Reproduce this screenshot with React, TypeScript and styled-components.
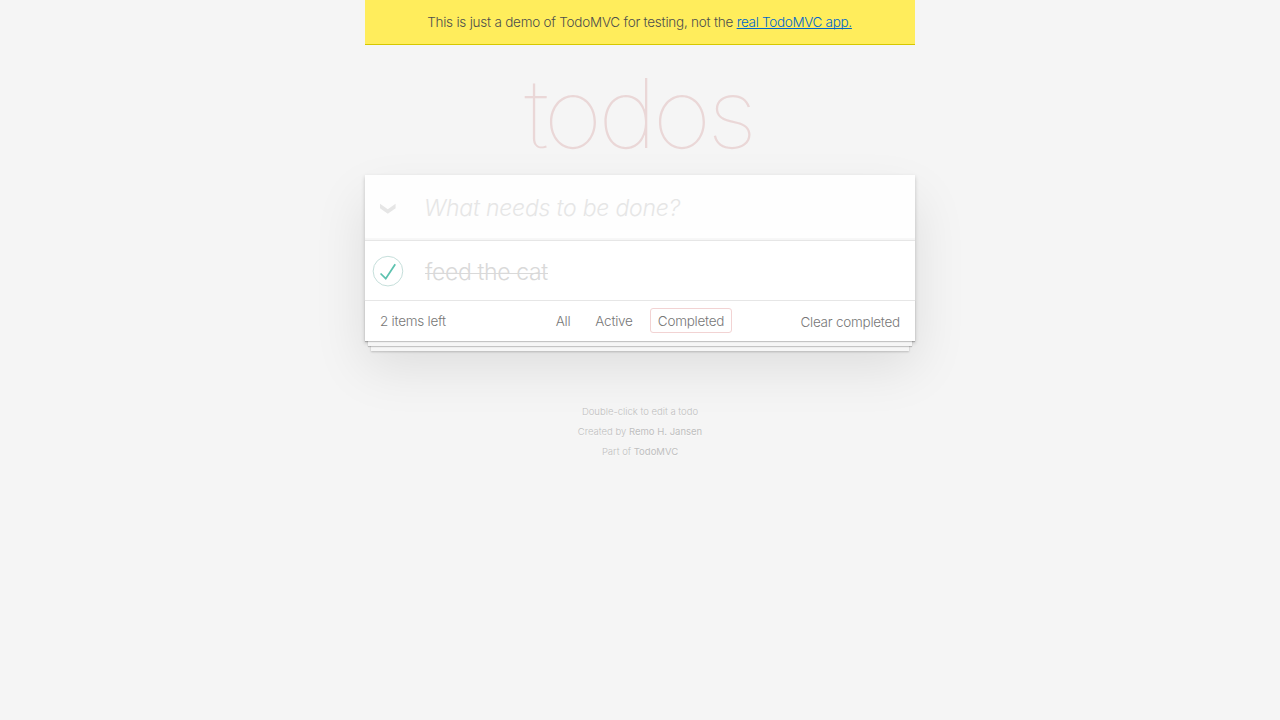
import React from "react";
import styled, { createGlobalStyle, css } from "styled-components";

const Global = createGlobalStyle`
  body {
    margin: 0;
    background: #f5f5f5;
    color: #4d4d4d;
    font: 300 13.5px/20px Inter, "Liberation Sans", sans-serif;
    -webkit-font-smoothing: antialiased;
  }
`;

const Page = styled.div`
  width: 550px;
  margin: 0 auto;
`;

const Banner = styled.div`
  box-sizing: border-box;
  height: 45px;
  padding-right: 1px;
  display: flex;
  align-items: center;
  justify-content: center;
  background: #ffed5c;
  border-bottom: 1px solid #d6c800;
  white-space: pre;
  letter-spacing: -0.23px;
`;

const BannerLink = styled.a`
  color: #0066cc;
  letter-spacing: -0.31px;
  text-decoration: underline;
  text-decoration-thickness: 1px;
  text-underline-offset: 1px;
  text-decoration-skip-ink: none;
`;

const Title = styled.h1`
  margin: 0;
  padding-right: 3px;
  height: 130px;
  line-height: 137px;
  font-size: 96px;
  font-weight: 100;
  letter-spacing: -4.3px;
  text-align: center;
  color: rgba(175, 47, 47, 0.15);
  transform: scaleX(1.06);
`;

const Card = styled.section`
  background: #fff;
  box-shadow: 0 2px 4px rgba(0, 0, 0, 0.2), 0 25px 50px rgba(0, 0, 0, 0.1);
`;

const Row = styled.div`
  display: flex;
  align-items: center;
  font-size: 23px;
`;

const EntryRow = styled(Row)`
  height: 65px;
  background: rgba(0, 0, 0, 0.003);
  box-shadow: inset 0 -2px 1px rgba(0, 0, 0, 0.03);
`;

const TodoRow = styled(Row)`
  height: 59px;
  border-top: 1px solid #e6e6e6;
`;

const IconCell = styled.div`
  width: 60px;
  display: flex;
`;

const Placeholder = styled.span`
  padding-top: 1px;
  margin-left: -1px;
  font-style: italic;
  color: #e6e6e6;
  letter-spacing: -0.21px;
`;

const TodoLabel = styled.span`
  position: relative;
  padding-top: 2px;
  color: #d9d9d9;
  letter-spacing: -0.37px;

  &::after {
    content: "";
    position: absolute;
    left: 0;
    right: 0;
    top: 13px;
    height: 1px;
    background: currentColor;
  }
`;

const Footer = styled.footer`
  box-sizing: border-box;
  height: 41px;
  padding: 0 15px;
  border-top: 1px solid #e6e6e6;
  display: grid;
  grid-template-columns: 168px 1fr 110px;
  align-items: center;
  color: #777;
  letter-spacing: -0.25px;
  white-space: nowrap;
  box-shadow: 0 1px 1px rgba(0, 0, 0, 0.2), 0 8px 0 -3px #f6f6f6,
    0 9px 1px -3px rgba(0, 0, 0, 0.2), 0 16px 0 -6px #f6f6f6,
    0 17px 2px -6px rgba(0, 0, 0, 0.2);
`;

const Filters = styled.nav`
  display: flex;
  gap: 10px;
  padding-bottom: 2px;
`;

const Filter = styled.a<{ $width: number; $selected?: boolean }>`
  box-sizing: border-box;
  width: ${(p) => p.$width}px;
  height: 25px;
  line-height: 24px;
  text-align: center;
  border: 1px solid transparent;
  border-radius: 3px;
  ${(p) =>
    p.$selected &&
    css`
      border-color: #f2d3d3;
    `}
`;

const Clear = styled.button`
  padding: 2px 0 0;
  border: 0;
  background: none;
  font: inherit;
  color: inherit;
  letter-spacing: inherit;
  text-align: right;
`;

const Info = styled.footer`
  margin-top: 61px;
  color: #bfbfbf;
  font-size: 9.5px;
  line-height: 20px;
  text-align: center;
  text-shadow: 0 1px 0 rgba(255, 255, 255, 0.5);
`;

const InfoLine = styled.p`
  margin: 0;
`;

const Credit = styled.a`
  font-weight: 400;
`;

const Chevron = () => (
  <svg width="46" height="20" viewBox="0 0 46 20">
    <path d="M15 5.8L22.8 11.2 30.6 5.8v4.4L22.8 15.8 15 10.2z" fill="#e6e6e6" />
  </svg>
);

const Check = () => (
  <svg width="40" height="40" viewBox="-10 -18 100 135">
    <circle cx="50" cy="50" r="50" fill="none" stroke="#bddad5" strokeWidth="3" />
    <path fill="#5dc2af" d="M72 25L42 71 27 56l-4 4 20 20 34-52z" />
  </svg>
);

export default function App() {
  return (
    <>
      <Global />
      <Page>
        <Banner>
          <span>This is just a demo of TodoMVC for testing, not the </span>
          <BannerLink>real TodoMVC app.</BannerLink>
        </Banner>
        <Title>todos</Title>
        <Card>
          <EntryRow>
            <IconCell>
              <Chevron />
            </IconCell>
            <Placeholder>What needs to be done?</Placeholder>
          </EntryRow>
          <TodoRow>
            <IconCell>
              <Check />
            </IconCell>
            <TodoLabel>feed the cat</TodoLabel>
          </TodoRow>
          <Footer>
            <span>2 items left</span>
            <Filters>
              <Filter $width={30}>All</Filter>
              <Filter $width={52}>Active</Filter>
              <Filter $width={82} $selected>
                Completed
              </Filter>
            </Filters>
            <Clear>Clear completed</Clear>
          </Footer>
        </Card>
        <Info>
          <InfoLine>Double-click to edit a todo</InfoLine>
          <InfoLine>
            Created by <Credit>Remo H. Jansen</Credit>
          </InfoLine>
          <InfoLine>
            Part of <Credit>TodoMVC</Credit>
          </InfoLine>
        </Info>
      </Page>
    </>
  );
}
